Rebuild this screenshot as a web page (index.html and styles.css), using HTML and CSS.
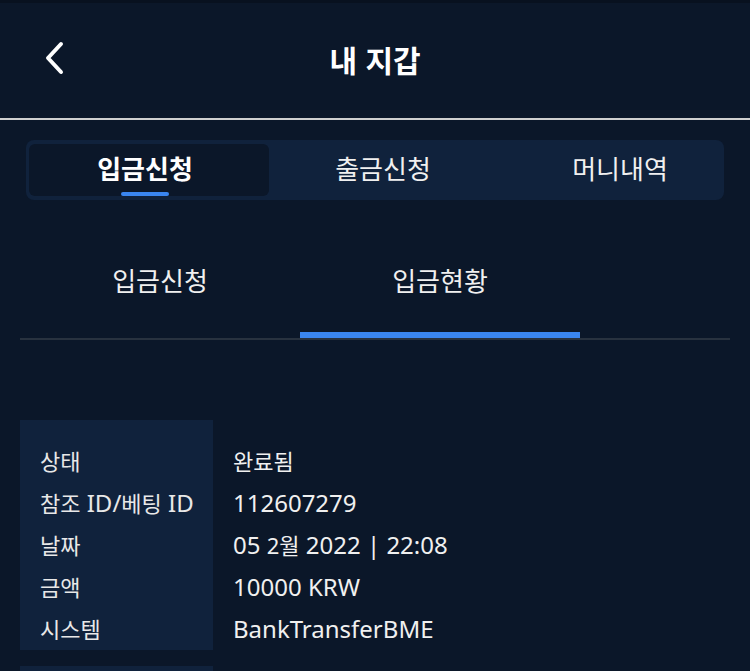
FILE: index.html
```html
<!DOCTYPE html>
<html lang="ko">
<head>
    <meta charset="UTF-8">
    <meta name="viewport" content="width=device-width, initial-scale=1.0">
    <title>내 지갑</title>
    <link rel="stylesheet" href="styles.css">
</head>
<body>
    <div class="header">
        <a class="back" href="#">
            <svg width="24" height="34" viewBox="0 0 24 34"><polyline points="18,3 5,17 18,31" fill="none" stroke="#fff" stroke-width="4" stroke-linecap="round" stroke-linejoin="round"/></svg>
        </a>
        <h1 class="title">내 지갑</h1>
    </div>

    <div class="content">
        <div class="seg">
            <div class="seg-item on"><span>입금신청</span><i></i></div>
            <div class="seg-item"><span>출금신청</span></div>
            <div class="seg-item"><span>머니내역</span></div>
        </div>

        <div class="subtab">
            <div class="subtab-item">입금신청</div>
            <div class="subtab-item on">입금현황</div>
        </div>

        <div class="info">
            <div class="info-label"><span class="ko">상태</span></div>
            <div class="info-value"><span class="ko">완료됨</span></div>
            <div class="info-label"><span class="ko">참조</span> ID/<span class="ko">베팅</span> ID</div>
            <div class="info-value">112607279</div>
            <div class="info-label"><span class="ko">날짜</span></div>
            <div class="info-value">05 <span class="ko">2월</span> 2022 | 22:08</div>
            <div class="info-label"><span class="ko">금액</span></div>
            <div class="info-value">10000 KRW</div>
            <div class="info-label"><span class="ko">시스템</span></div>
            <div class="info-value">BankTransferBME</div>
        </div>

        <div class="info info-next">
            <div class="info-label"></div>
            <div class="info-value"></div>
        </div>
    </div>
</body>
</html>
```

FILE: styles.css
```css
* {padding: 0;margin: 0;box-sizing: border-box;}
body {background: #0b1729;color: #f0f0f0;font-family: "Noto Sans", "Noto Sans CJK KR", sans-serif;overflow: hidden;}

.header {position: relative;height: 120px;border-top: 3px solid #08111f;border-bottom: 2px solid #d0d0d0;display: flex;align-items: center;justify-content: center;}
.header .back {position: absolute;left: 43px;top: 38px;display: block;}
.title {font-family: "Noto Sans CJK KR", sans-serif;font-size: 30px;font-weight: 700;color: #fff;margin-top: -3px;}

.content {padding: 20px 20px 0;}

.seg {display: grid;grid-template-columns: 240px 228px 246px;height: 60px;margin: 0 6px;padding: 4px 3px;background: #10223c;border-radius: 8px;overflow: hidden;}
.seg-item {position: relative;display: flex;justify-content: center;font-family: "Noto Sans CJK KR", sans-serif;font-size: 26px;line-height: 48px;color: #f0f0f0;border-radius: 6px;}
.seg-item.on {background: #0b1729;font-weight: 700;color: #fff;padding-right: 8px;}
.seg-item i {position: absolute;left: 50%;bottom: 0;width: 48px;height: 4px;margin-left: -28px;background: #3a86f0;border-radius: 2px;}

.subtab {display: flex;margin-top: 40px;border-bottom: 2px solid #28323f;}
.subtab-item {width: 280px;text-align: center;font-family: "Noto Sans CJK KR", sans-serif;font-size: 26px;line-height: 36px;padding: 22px 0 34px;border-bottom: 6px solid transparent;color: #f0f0f0;}
.subtab-item.on {border-bottom-color: #3a86f0;}

.info {display: grid;grid-template-columns: 193px 1fr;margin-top: 80px;font-size: 24px;line-height: 42px;}
.info .ko {font-size: 22px;}
.info-label {background: #10223c;padding-left: 20px;color: #e8e8e8;}
.info-value {padding-left: 20px;color: #f0f0f0;}
.info-label:first-child, .info-label:first-child + .info-value {padding-top: 20px;height: 62px;}
.info-next {margin-top: 16px;}
```
